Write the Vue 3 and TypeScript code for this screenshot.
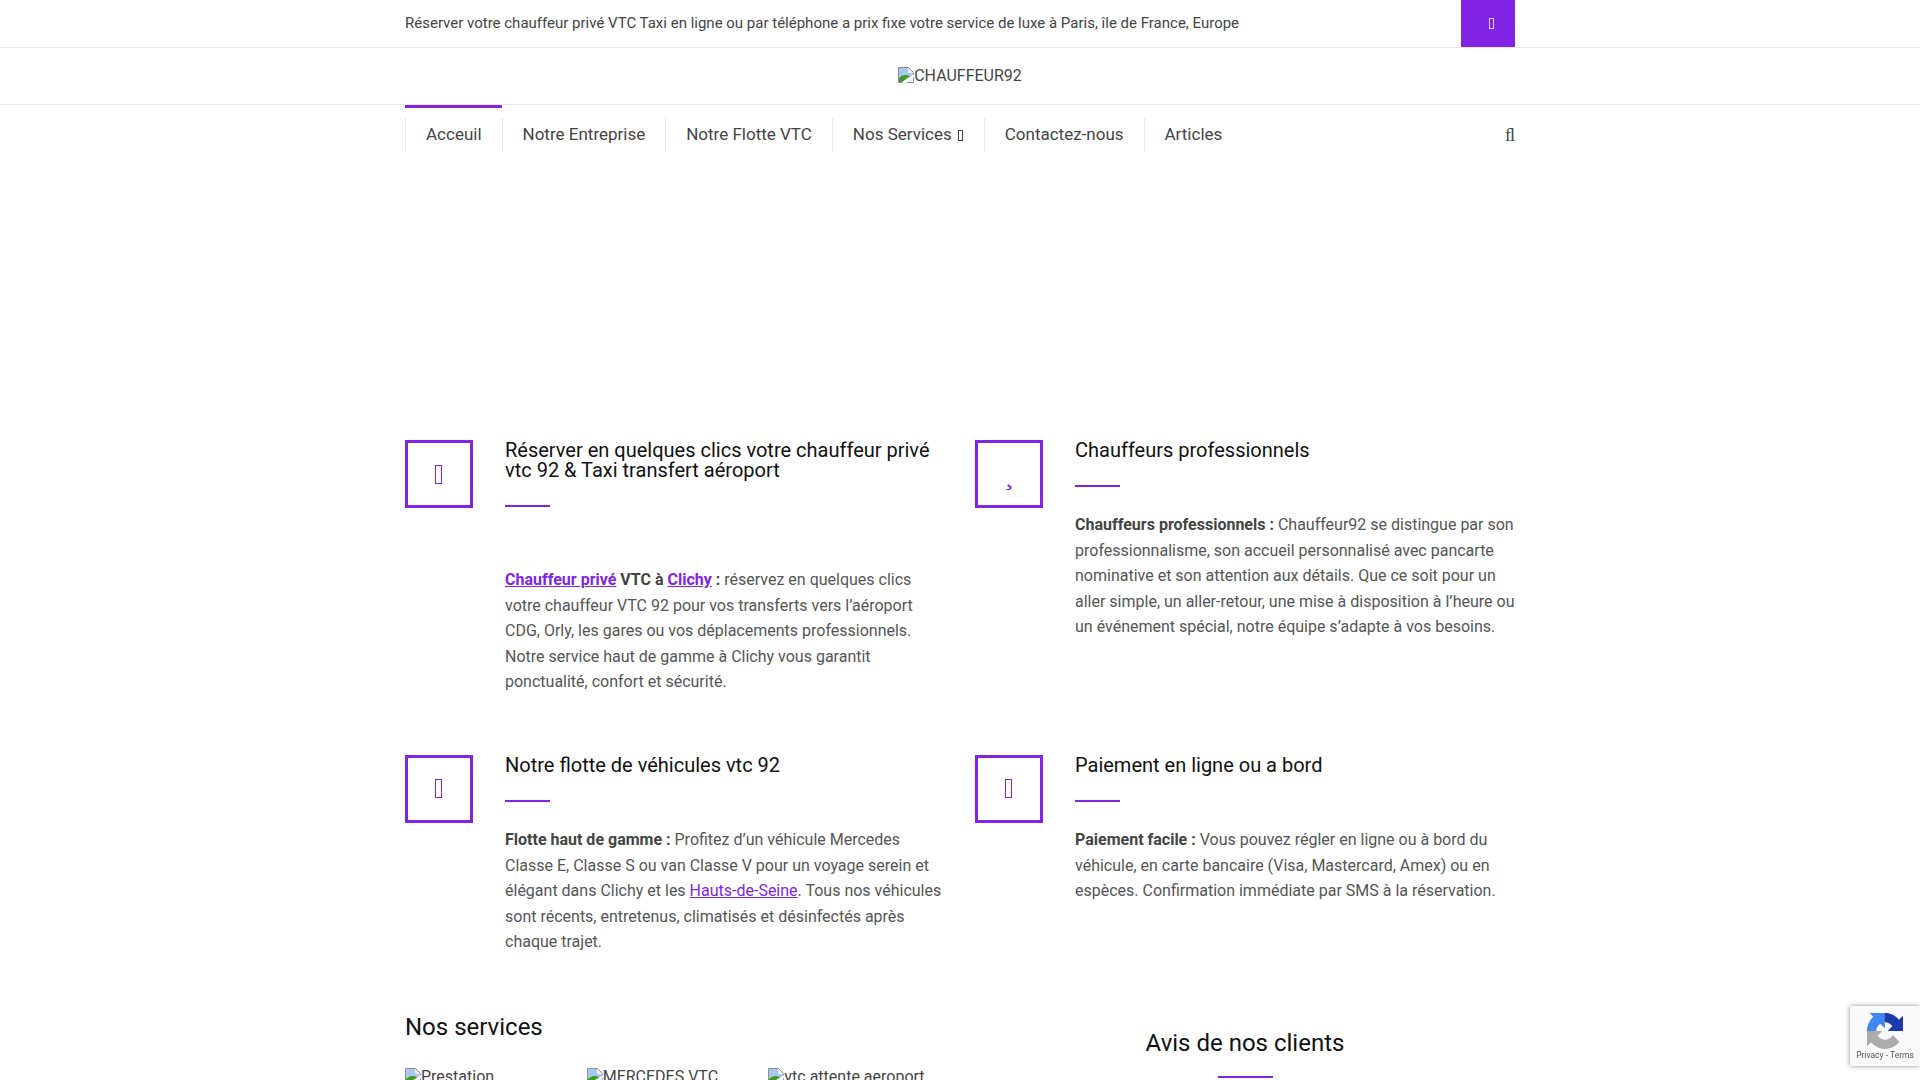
<script setup lang="ts">
const navItems = [
  { label: 'Acceuil', active: true },
  { label: 'Notre Entreprise' },
  { label: 'Notre Flotte VTC' },
  { label: 'Nos Services', caret: true },
  { label: 'Contactez-nous' },
  { label: 'Articles' },
]

const services = ['Prestation', 'MERCEDES VTC', 'vtc attente aeroport']
</script>

<template>
  <div class="page">
    <header>
      <div class="topbar">
        <div class="container topbar-inner">
          <p class="tagline">Réserver votre chauffeur privé VTC Taxi en ligne ou par téléphone a prix fixe votre service de luxe à Paris, île de France, Europe</p>
          <a class="top-btn" href="#"><i class="tofu tofu-small"></i></a>
        </div>
      </div>

      <div class="logo-row">
        <span class="broken">
          <svg class="broken-icon" viewBox="0 0 16 16" width="16" height="16">
            <path d="M.5.5h10l5 5v10H.5z" fill="#eee" stroke="#909090" />
            <path d="M1 1h9v5h5v4L1 13z" fill="#a9c8f0" />
            <path d="M1 15v-4c3-3 7-4 11-2l-8 6z" fill="#3f9a22" />
            <path d="M4 16l12-9v3l-8 6z" fill="#fff" />
          </svg>CHAUFFEUR92
        </span>
      </div>

      <nav class="container nav">
        <ul class="menu">
          <li v-for="item in navItems" :key="item.label" :class="{ active: item.active }">
            <a href="#">{{ item.label }}<i v-if="item.caret" class="tofu tofu-small caret"></i></a>
          </li>
        </ul>
        <span class="search">ﬂ</span>
      </nav>
    </header>

    <main class="container">
      <section class="features">
        <article class="feature">
          <div class="icon-box"><i class="tofu"></i></div>
          <div class="feature-body">
            <h3>Réserver en quelques clics votre chauffeur privé vtc 92 &amp; Taxi transfert aéroport</h3>
            <p class="spaced">
              <strong><a href="#">Chauffeur privé</a> VTC à <a href="#">Clichy</a> :</strong>
              réservez en quelques clics votre chauffeur VTC 92 pour vos transferts vers l’aéroport CDG, Orly, les gares ou vos déplacements professionnels. Notre service haut de gamme à Clichy vous garantit ponctualité, confort et sécurité.
            </p>
          </div>
        </article>

        <article class="feature">
          <div class="icon-box icon-hook">¸</div>
          <div class="feature-body">
            <h3>Chauffeurs professionnels</h3>
            <p>
              <strong>Chauffeurs professionnels :</strong>
              Chauffeur92 se distingue par son professionnalisme, son accueil personnalisé avec pancarte nominative et son attention aux détails. Que ce soit pour un aller simple, un aller-retour, une mise à disposition à l’heure ou un événement spécial, notre équipe s’adapte à vos besoins.
            </p>
          </div>
        </article>

        <article class="feature">
          <div class="icon-box"><i class="tofu"></i></div>
          <div class="feature-body">
            <h3>Notre flotte de véhicules vtc 92</h3>
            <p>
              <strong>Flotte haut de gamme :</strong>
              Profitez d’un véhicule Mercedes Classe E, Classe S ou van Classe V pour un voyage serein et élégant dans Clichy et les <a href="#">Hauts-de-Seine</a>. Tous nos véhicules sont récents, entretenus, climatisés et désinfectés après chaque trajet.
            </p>
          </div>
        </article>

        <article class="feature">
          <div class="icon-box"><i class="tofu"></i></div>
          <div class="feature-body">
            <h3>Paiement en ligne ou a bord</h3>
            <p>
              <strong>Paiement facile :</strong>
              Vous pouvez régler en ligne ou à bord du véhicule, en carte bancaire (Visa, Mastercard, Amex) ou en espèces. Confirmation immédiate par SMS à la réservation.
            </p>
          </div>
        </article>
      </section>

      <section class="bottom">
        <div>
          <h2 class="services-title">Nos services</h2>
          <div class="services">
            <span v-for="name in services" :key="name" class="broken">
              <svg class="broken-icon" viewBox="0 0 16 16" width="16" height="16">
                <path d="M.5.5h10l5 5v10H.5z" fill="#eee" stroke="#909090" />
                <path d="M1 1h9v5h5v4L1 13z" fill="#a9c8f0" />
                <path d="M1 15v-4c3-3 7-4 11-2l-8 6z" fill="#3f9a22" />
                <path d="M4 16l12-9v3l-8 6z" fill="#fff" />
              </svg>{{ name }}
            </span>
          </div>
        </div>
        <div class="reviews">
          <h2>Avis de nos clients</h2>
          <div class="reviews-line"></div>
        </div>
      </section>
    </main>

    <aside class="recaptcha">
      <svg viewBox="0 0 64 64" width="36" height="36">
        <path fill="#1c3aa9" d="M64 31.955l-.033-1.37V4.687l-7.16 7.16C50.948 4.674 42.033.093 32.05.093c-10.4 0-19.622 4.96-25.458 12.64l11.736 11.86a15.55 15.55 0 0 1 4.754-5.334c2.05-1.6 4.952-2.906 8.968-2.906.485 0 .86.057 1.135.163 4.976.393 9.29 3.14 11.83 7.124l-8.307 8.307c10.522-.04 22.4-.066 27.295.005" />
        <path fill="#4285f4" d="M31.876.001l-1.37.033H4.61l7.16 7.16C4.598 13.053.017 21.968.017 31.95h16.2c0-.485.057-.86.163-1.135.393-4.976 3.14-9.29 7.124-11.83l8.307 8.307c-.04-10.522-.066-22.4.005-27.295" />
        <path fill="#ababab" d="M.001 31.955l.033 1.37v25.9l7.16-7.16c5.858 7.173 14.774 11.754 24.756 11.754 10.4 0 19.622-4.96 25.458-12.64l-11.736-11.86a15.55 15.55 0 0 1-4.754 5.334c-2.05 1.6-4.952 2.906-8.968 2.906-.485 0-.86-.057-1.135-.163-4.976-.393-9.29-3.14-11.83-7.124l8.307-8.307c-10.522.04-22.4.066-27.295-.005" />
      </svg>
      <span class="recaptcha-links">Privacy - Terms</span>
    </aside>
  </div>
</template>

<style scoped>
.page {
  height: 100vh;
  overflow: hidden;
  position: relative;
  background: #fff;
  color: #555;
  font-family: Roboto, "Liberation Sans", sans-serif;
  font-size: 16px;
  line-height: 25.6px;
}

.container {
  width: 1110px;
  margin: 0 auto;
}

a {
  color: #8224e3;
}

strong {
  color: #444;
}

.tofu {
  display: block;
  box-sizing: border-box;
  width: 7px;
  height: 19px;
  border: 1px solid currentColor;
}

.tofu-small {
  display: inline-block;
  width: 5px;
  height: 11px;
}

.topbar {
  border-bottom: 1px solid #e8e8e8;
}

.topbar-inner {
  display: flex;
  justify-content: space-between;
  align-items: center;
  height: 47px;
}

.tagline {
  margin: 0;
  color: #444;
  font-size: 15px;
}

.top-btn {
  display: flex;
  justify-content: center;
  align-items: center;
  box-sizing: border-box;
  width: 54px;
  height: 47px;
  padding-left: 6px;
  background: #8224e3;
  color: #e0c8f8;
}

.logo-row {
  display: flex;
  justify-content: center;
  align-items: center;
  height: 56px;
  border-bottom: 1px solid #e8e8e8;
  color: #444;
}

.broken {
  white-space: nowrap;
}

.broken-icon {
  vertical-align: -2px;
}

.nav {
  display: flex;
  justify-content: space-between;
}

.menu {
  display: flex;
  margin: 0;
  padding: 0;
  list-style: none;
}

.menu li {
  padding-top: 10px;
  border-top: 3px solid transparent;
}

.menu li.active {
  border-top-color: #8224e3;
}

.menu a {
  display: block;
  height: 33px;
  padding: 0 20px;
  border-left: 1px solid #e8e8e8;
  color: #444;
  font-size: 17px;
  line-height: 32px;
  text-decoration: none;
}

.caret {
  margin-left: 6px;
  margin-right: 1px;
  vertical-align: -1px;
}

.search {
  margin-top: 20px;
  color: #444;
  font-family: "Liberation Serif", serif;
  font-size: 18px;
  line-height: 20px;
}

.features {
  display: grid;
  grid-template-columns: 540px 540px;
  column-gap: 30px;
  row-gap: 60px;
  margin-top: 289px;
}

.feature {
  display: flex;
  gap: 32px;
}

.icon-box {
  flex: none;
  display: flex;
  justify-content: center;
  align-items: center;
  box-sizing: border-box;
  width: 68px;
  height: 68px;
  padding-right: 1px;
  border: 3px solid #8224e3;
  color: #8224e3;
}

.icon-hook {
  padding-top: 1px;
  padding-right: 0;
  font-family: "Liberation Serif", serif;
  font-size: 28px;
  line-height: 62px;
}

.feature-body h3 {
  position: relative;
  margin: 0;
  padding-bottom: 27px;
  color: #111;
  font-size: 20px;
  font-weight: 400;
  line-height: 20px;
}

.feature-body h3::after {
  content: "";
  position: absolute;
  left: 0;
  bottom: 0;
  width: 45px;
  height: 2px;
  background: #8224e3;
}

.feature-body p {
  margin: 25px 0 0;
}

.feature-body p.spaced {
  margin-top: 60px;
}

.bottom {
  display: grid;
  grid-template-columns: 540px 540px;
  column-gap: 30px;
  margin-top: 57px;
}

.services-title {
  margin: 0;
  color: #111;
  font-size: 24px;
  font-weight: 400;
  line-height: 30px;
}

.services {
  display: grid;
  grid-template-columns: repeat(3, 1fr);
  column-gap: 5px;
  margin-top: 22px;
  color: #444;
  font-size: 16px;
}

.reviews {
  display: flex;
  flex-direction: column;
  align-items: center;
  padding-top: 16px;
}

.reviews h2 {
  margin: 0;
  color: #111;
  font-size: 24px;
  font-weight: 400;
  line-height: 30px;
}

.reviews-line {
  width: 55px;
  height: 2px;
  margin-top: 18px;
  background: #8224e3;
}

.recaptcha {
  position: fixed;
  right: 0;
  top: 1006px;
  display: flex;
  flex-direction: column;
  align-items: center;
  box-sizing: border-box;
  width: 70px;
  height: 60px;
  padding-top: 7px;
  background: #f9f9f9;
  border-radius: 2px 0 0 2px;
  box-shadow: 0 0 5px rgba(128, 128, 128, 0.9);
}

.recaptcha-links {
  color: #555;
  font-size: 8.5px;
  line-height: 12px;
  white-space: nowrap;
}
</style>

<style>
html,
body {
  margin: 0;
  overflow: hidden;
}
</style>
